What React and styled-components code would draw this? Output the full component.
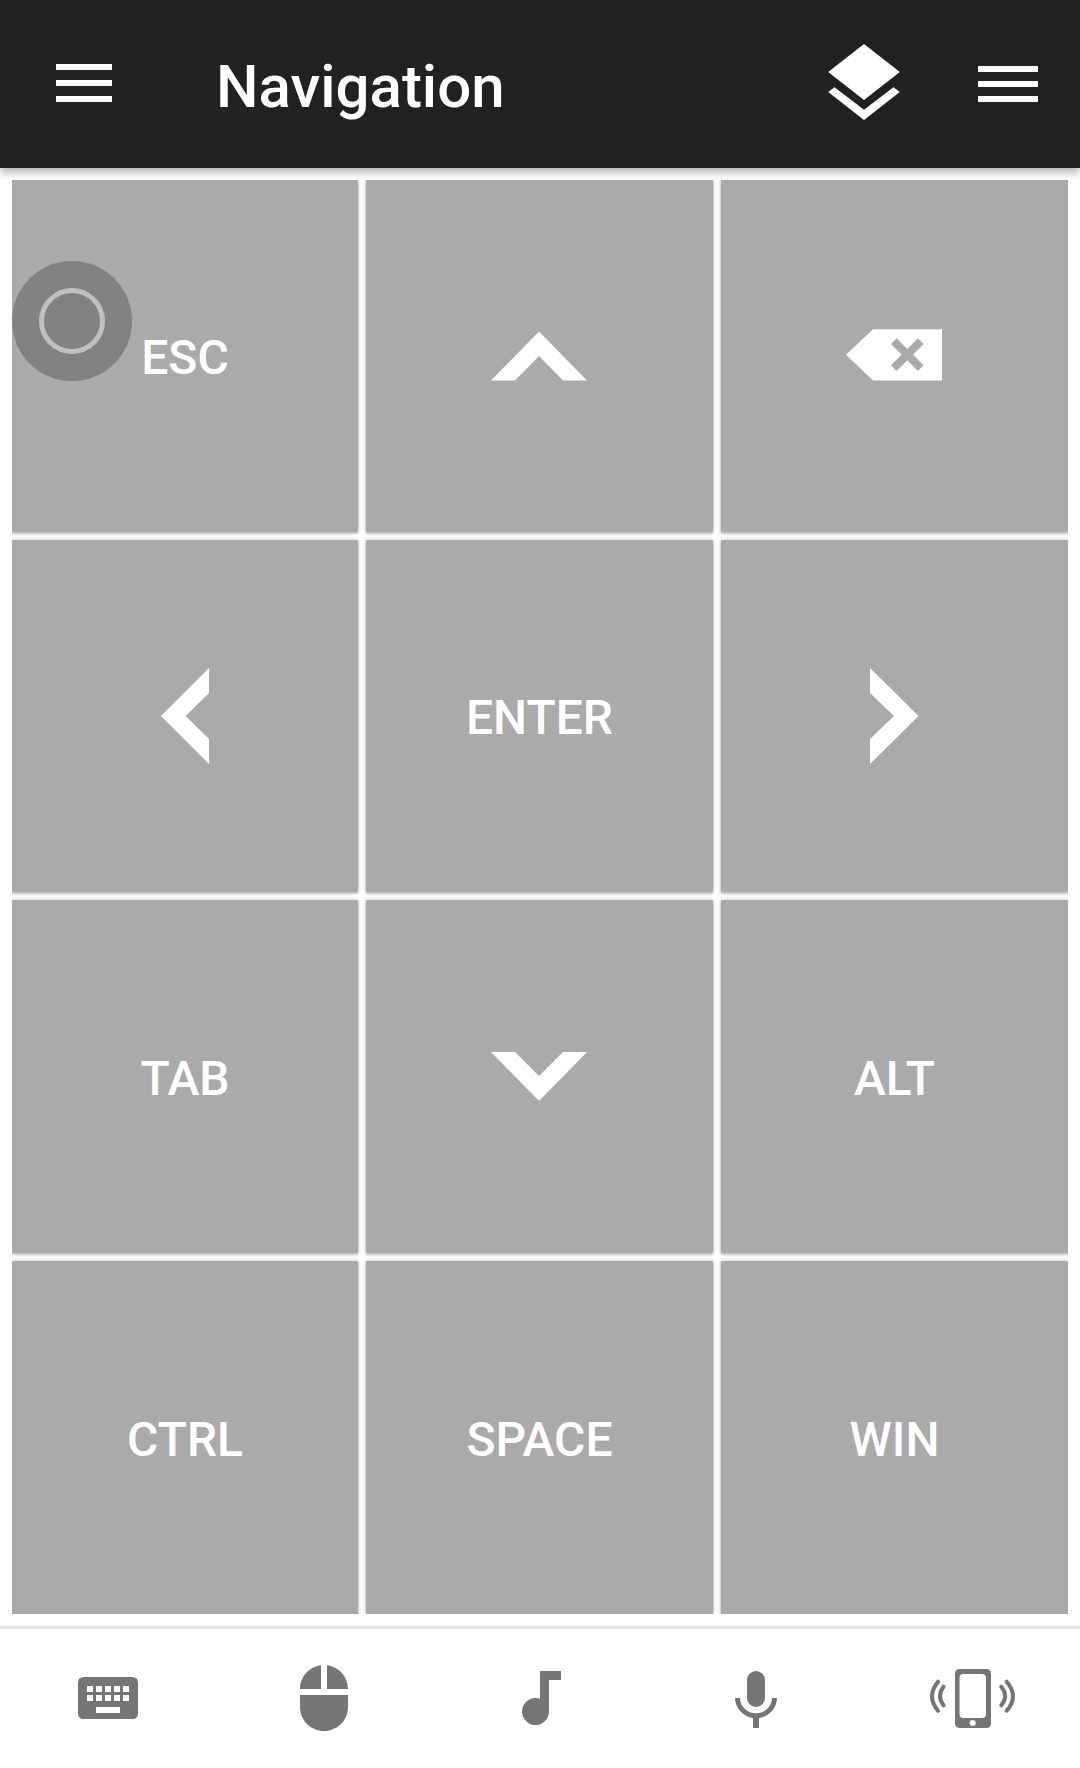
import React from 'react';
import styled, { createGlobalStyle } from 'styled-components';

const GlobalStyle = createGlobalStyle`
  * { box-sizing: border-box; }
  body { margin: 0; background: #fff; font-family: Roboto, sans-serif; }
`;

const Screen = styled.div`
  position: relative;
  width: 1080px;
  height: 1768px;
  display: flex;
  flex-direction: column;
  background: #fff;
  overflow: hidden;
`;

const Toolbar = styled.header`
  height: 168px;
  flex: none;
  display: flex;
  align-items: center;
  padding: 0 42px 0 56px;
  background: #212121;
  color: #fff;
  box-shadow: 0 4px 9px rgba(0, 0, 0, 0.32);
`;

const BarButton = styled.button`
  display: flex;
  padding: 0;
  border: 0;
  background: none;
  color: inherit;
  margin-left: ${(p) => p.$gap || 0}px;
`;

const Title = styled.h1`
  margin: 5px auto 0 104px;
  font-size: 60px;
  line-height: 71px;
  font-weight: 500;
`;

const Pad = styled.main`
  flex: 1;
  display: grid;
  grid-template-columns: 346px 347px 347px;
  grid-template-rows: 352px 352px 353px 353px;
  gap: 8px;
  margin: 12px;
  overflow: hidden;
`;

const Key = styled.button`
  display: flex;
  align-items: center;
  justify-content: center;
  padding: ${(p) => (p.$icon ? 0 : 3)}px 0 0;
  border: 0;
  background: #aaa;
  color: #fff;
  font: 500 48px/57px Roboto, sans-serif;
  box-shadow: 0 2px 2px rgba(0, 0, 0, 0.17), 0 0 4px rgba(0, 0, 0, 0.25);
`;

const AssistiveButton = styled.button`
  position: absolute;
  left: 12px;
  top: 261px;
  width: 120px;
  height: 120px;
  padding: 0;
  display: grid;
  place-items: center;
  border: 0;
  border-radius: 50%;
  background: #828282;
`;

const Ring = styled.span`
  width: 66px;
  height: 66px;
  border: 5px solid #c0c0c0;
  border-radius: 50%;
`;

const TabBar = styled.nav`
  height: 142px;
  flex: none;
  display: grid;
  grid-template-columns: repeat(5, 1fr);
  border-top: 3px solid #e2e2e2;
  background: #fff;
`;

const Tab = styled.button`
  display: flex;
  align-items: center;
  justify-content: center;
  padding: 0 0 1px;
  border: 0;
  background: none;
  color: #757575;
`;

const Icon = ({ w, h, children }) => (
  <svg width={w} height={h} viewBox={`0 0 ${w} ${h}`} fill="currentColor" aria-hidden="true">
    {children}
  </svg>
);

const DrawerIcon = () => (
  <Icon w={56} h={40}><path d="M0 0h56v6H0zM0 16h56v6H0zM0 32h56v6H0z" /></Icon>
);
const MenuIcon = () => (
  <Icon w={60} h={36}><path d="M0 0h60v6H0zM0 15h60v6H0zM0 30h60v6H0z" /></Icon>
);
const LayersIcon = () => (
  <Icon w={72} h={80}>
    <path d="M36 0 71.800 28 36 56 .2 28zM6.500 43.300 36 65.700 65.500 43.300 71.800 48 36 76 .2 48z" />
  </Icon>
);

const UpIcon = () => <Icon w={97} h={50}><path d="M48 .5 96 49.500H72L48 25 24 49.500H0z" /></Icon>;
const DownIcon = () => <Icon w={97} h={49}><path d="M0 0H24L48 24 72 0H96L48 49z" /></Icon>;
const LeftIcon = () => <Icon w={48} h={96}><path d="M48 0V25L24.500 48 48 71V96L0 48z" /></Icon>;
const RightIcon = () => <Icon w={49} h={96}><path d="M0 0V25L24 48 0 71V96L48.500 48z" /></Icon>;
const DeleteIcon = () => (
  <Icon w={97} h={54}>
    <path d="M27 .3H96V51.500H27L0 25.800z" />
    <path d="M47.800 12.200 74.800 39.200M74.800 12.200 47.800 39.200" stroke="#aaa" strokeWidth="8" />
  </Icon>
);

const KeyboardIcon = () => (
  <Icon w={60} h={42}>
    <path fillRule="evenodd" d="M6 0H54Q60 0 60 6V36Q60 42 54 42H6Q0 42 0 36V6Q0 0 6 0zM9 9v6h6V9zM18 9v6h6V9zM27 9v6h6V9zM36 9v6h6V9zM45 9v6h6V9zM9 18v6h6V18zM18 18v6h6V18zM27 18v6h6V18zM36 18v6h6V18zM45 18v6h6V18zM18 30v6h24V30z" />
  </Icon>
);
const MouseIcon = () => (
  <Icon w={48} h={66}>
    <path d="M27 .2V24H48C48 11.8 38.8 1.6 27 .2zM0 42C0 55.3 10.7 66 24 66S48 55.3 48 42V30H0zM21 .2C9.2 1.6 0 11.8 0 24H21z" />
  </Icon>
);
const NoteIcon = () => (
  <Icon w={42} h={54}>
    <path d="M21 0V27.800A13.500 13.500 0 1 0 30 40.500V9H42V0z" />
  </Icon>
);
const MicIcon = () => (
  <Icon w={42} h={60}>
    <path d="M21 39A9 9 0 0 0 30 30V12A9 9 0 0 0 12 12V30A9 9 0 0 0 21 39zM36.900 30C36.900 39 29.300 45.300 21 45.300S5.100 39 5.100 30H0C0 40.200 8.200 48.700 18 50.200V60H24V50.200C33.800 48.700 42 40.200 42 30z" />
  </Icon>
);
const PhoneIcon = () => (
  <Icon w={88} h={60}>
    <path fillRule="evenodd" d="M32 1H58Q63 1 63 6V55Q63 60 58 60H32Q27 60 27 55V6Q27 1 32 1zM35.500 6Q31.500 6 31.500 10V46Q31.500 50 35.500 50H54Q58 50 58 46V10Q58 6 54 6zM44.700 52A3 3 0 1 0 44.700 58A3 3 0 1 0 44.700 52z" />
    <path d="M10 13.700Q-2 28.200 10 42.700M15.500 18.700Q8.500 28 15.500 37.300M78.700 13.700Q91.300 28.200 78.700 42.700M73.300 18.700Q81 28 73.300 37.300" fill="none" stroke="currentColor" strokeWidth="4" strokeLinecap="round" />
  </Icon>
);

const keys = [
  { id: 'esc', label: 'ESC' },
  { id: 'up', icon: UpIcon },
  { id: 'backspace', icon: DeleteIcon },
  { id: 'left', icon: LeftIcon },
  { id: 'enter', label: 'ENTER' },
  { id: 'right', icon: RightIcon },
  { id: 'tab', label: 'TAB' },
  { id: 'down', icon: DownIcon },
  { id: 'alt', label: 'ALT' },
  { id: 'ctrl', label: 'CTRL' },
  { id: 'space', label: 'SPACE' },
  { id: 'win', label: 'WIN' },
];

const tabs = [KeyboardIcon, MouseIcon, NoteIcon, MicIcon, PhoneIcon];

export default function App() {
  return (
    <Screen>
      <GlobalStyle />
      <Toolbar>
        <BarButton><DrawerIcon /></BarButton>
        <Title>Navigation</Title>
        <BarButton><LayersIcon /></BarButton>
        <BarButton $gap={78}><MenuIcon /></BarButton>
      </Toolbar>
      <Pad>
        {keys.map(({ id, label, icon: Glyph }) => (
          <Key key={id} $icon={Boolean(Glyph)}>{Glyph ? <Glyph /> : label}</Key>
        ))}
      </Pad>
      <TabBar>
        {tabs.map((Glyph, i) => <Tab key={i}><Glyph /></Tab>)}
      </TabBar>
      <AssistiveButton><Ring /></AssistiveButton>
    </Screen>
  );
}
